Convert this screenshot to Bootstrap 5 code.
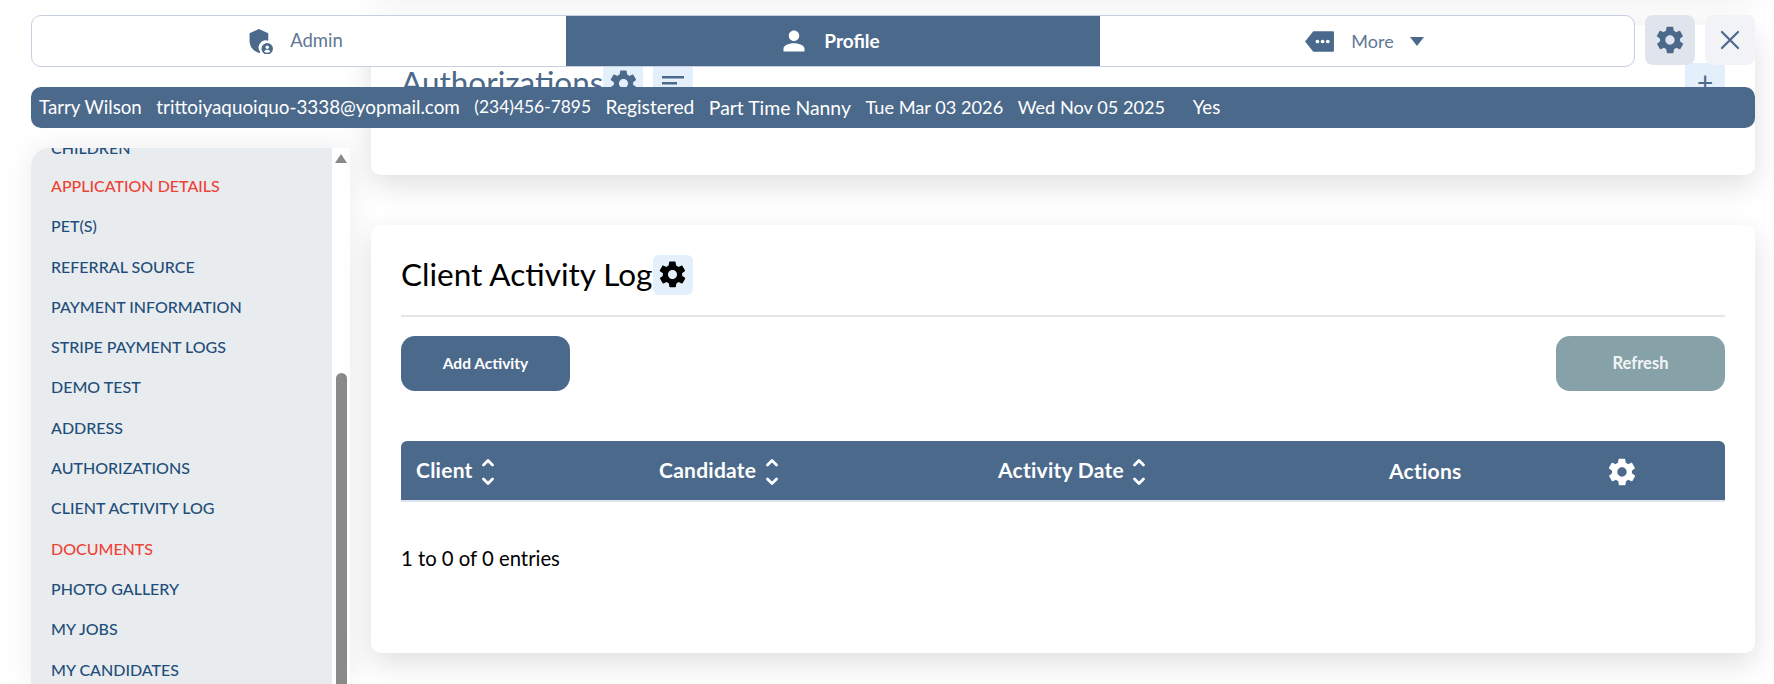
<!DOCTYPE html>
<html lang="en">
<head>
    <meta charset="UTF-8">
    <meta name="viewport" content="width=device-width, initial-scale=1.0">
    <title>Client Activity Log</title>
    <link rel="stylesheet" href="https://cdn.jsdelivr.net/npm/bootstrap@5.3.0/dist/css/bootstrap.min.css">
    <style>
        html, body { height: 684px; overflow: hidden; }
        body { background: #fff; color: #000; font-family: "Lato", "Noto Sans", sans-serif; position: relative; }
        .page-cols { padding: 0 19px 0 31px; gap: 21px; height: 684px; overflow: hidden; }

        /* top stack sits over the scrolled page */
        .top-stack { position: absolute; left: 31px; right: 19px; top: 15px; }
        .tab-row { gap: 7px; height: 52px; }
        .tab-group { border: 1px solid #c5cfe0; border-radius: 10px; background: #fff; overflow: hidden; height: 52px; }
        .tab-item { flex: 1 1 0; color: #5f7893; font-size: 18.5px; gap: 16px; padding-right: 6px; }
        .tab-item.on { background: #4b698b; color: #fff; font-weight: 700; font-size: 19px; }
        .tab-item.more-tab { font-size: 18px; }
        .side-btn { width: 50px; height: 50px; border-radius: 8px; }
        .side-btn.gear { background: #e0e4ec; margin-left: 3px; }
        .side-btn.shut { background: #f2f3f6; margin-left: 3px; }
        .info-strip { margin-top: 20px; height: 41px; background: #4b698b; color: #fff; border-radius: 10px; padding: 0 8px; font-size: 18.7px; }
        .info-strip span { margin-right: 14.500px; white-space: nowrap; }
        .info-strip .mail-val { font-size: 18.850px; }
        .info-strip .phone-val { font-size: 17.4px; }
        .info-strip .status-val { font-size: 19.200px; }
        .info-strip .type-val { font-size: 19.400px; }
        .info-strip .date-val { font-size: 18.2px; }
        .info-strip .yes-val { margin-left: 13px; }

        /* left menu */
        .side-wrap { width: 319px; flex: none; margin-top: 148px; background: #fff; box-shadow: 0 0 30px rgba(0,0,0,.08); border-radius: 18px 0 0 0; overflow: hidden; }
        .side-list { width: 301px; background: #e9ecef; margin: 0; padding: 0 0 0 20px; list-style: none; }
        .side-list li { height: 40.3px; line-height: 40px; font-size: 16px; font-weight: 500; color: #1f4e7a; white-space: nowrap; }
        .side-list li.first { height: 18px; line-height: 0; }
        .side-list li.red { color: #ee4236; }
        .side-track { width: 18px; }
        .track-arrow { width: 0; height: 0; margin: 6px 0 0 3px; border-left: 6.5px solid transparent; border-right: 6.5px solid transparent; border-bottom: 9px solid #8a8a8a; }
        .track-thumb { width: 11px; margin: 210px 0 0 4px; height: 400px; background: #8a8a8a; border-radius: 6px 6px 0 0; }

        /* right cards */
        .main-col { min-width: 0; }
        .panel-box { background: #fff; border-radius: 10px; box-shadow: 0 10px 30px rgba(0,0,0,.13); }
        .panel-ghost { height: 10px; margin-top: -20px; }
        .panel-auth { height: 150px; margin-top: 35px; padding: 0 30px; }
        .panel-log { height: 428px; margin-top: 50px; padding: 0 30px; }
        .auth-head { padding-top: 38px; }
        .auth-title { font-size: 31.5px; line-height: 38px; color: #4b698b; font-weight: 400; margin: 0; }
        .tool-chip { width: 40px; height: 40px; background: #e3f0fc; border-radius: 6px; }
        .tool-chip.next-chip { margin-left: 10px; }
        .plus-chip { width: 40px; height: 40px; background: #e3f0fc; border-radius: 4px; color: #4b698b; font-size: 28px; line-height: 38px; text-align: center; }
        .log-head { height: 92px; padding-top: 9px; border-bottom: 2px solid #e6e6e6; }
        .log-title { font-size: 31.5px; font-weight: 400; margin: 0; color: #000; }
        .act-row { margin-top: 19px; }
        .act-btn { width: 169px; height: 55px; padding-bottom: 1px; border-radius: 14px; border: 0; color: #fff; font-size: 15.5px; font-weight: 700; }
        .act-btn.add { background: #4b698b; }
        .act-btn.refresh { background: #86a1a7; font-size: 16.500px; color: #f2f5f6; }
        .log-table { margin: 50px 0 0; width: 100%; table-layout: fixed; }
        .log-table th { background: #4b698b; color: #fff; height: 60px; font-size: 21px; letter-spacing: .25px; font-weight: 700; vertical-align: middle; border-bottom: 2px solid #dfe3ec; padding: 0 0 0 15px; white-space: nowrap; }
        .log-table th:first-child { border-radius: 6px 0 0 0; }
        .log-table th:last-child { border-radius: 0 6px 0 0; }
        .col-client { width: 243px; }
        .col-candidate { width: 339px; }
        .col-date { width: 391px; }
        .col-actions { width: 217px; }
        .sort-arrows { margin-left: 3px; vertical-align: middle; }
        .entry-note { margin-top: 41px; font-size: 20.3px; }
    </style>
</head>
<body>
    <svg width="0" height="0" class="d-block">
        <symbol id="ic-gear" viewBox="0 0 24 24">
            <path fill="currentColor" d="M19.4 13c.1-.3.1-.7.1-1s0-.7-.1-1l2.1-1.6c.2-.2.2-.4.1-.6l-2-3.5c-.1-.2-.4-.3-.6-.2l-2.5 1c-.5-.4-1.1-.7-1.7-1l-.4-2.6c0-.3-.2-.5-.5-.5h-4c-.3 0-.5.2-.5.4l-.4 2.7c-.6.2-1.2.6-1.7 1l-2.500-1c-.2-.1-.5 0-.6.2l-2 3.5c-.1.2-.1.5.1.6L4.6 11c0 .3-.1.7-.1 1s0 .7.1 1l-2.100 1.600c-.2.2-.2.4-.1.6l2 3.500c.1.2.4.3.6.2l2.500-1c.5.4 1.100.7 1.700 1l.4 2.600c0 .2.2.4.5.4h4c.3 0 .5-.2.5-.4l.4-2.600c.6-.3 1.200-.6 1.700-1l2.500 1c.2.1.5 0 .6-.2l2-3.500c.1-.2.1-.5-.1-.6L19.400 13zM12 15.500c-1.900 0-3.500-1.600-3.500-3.500s1.600-3.500 3.500-3.500 3.500 1.600 3.500 3.500-1.600 3.500-3.500 3.500z"/>
        </symbol>
        <symbol id="ic-sort" viewBox="0 0 14 30">
            <path fill="none" stroke="currentColor" stroke-width="2.800" stroke-linecap="round" stroke-linejoin="round" d="M2.500 8 7 3.500 11.500 8M2.500 22 7 26.500 11.500 22"/>
        </symbol>
    </svg>

    <div class="page-cols d-flex">
        <div class="side-wrap d-flex">
            <ul class="side-list">
                <li class="first">CHILDREN</li>
                <li class="red">APPLICATION DETAILS</li>
                <li>PET(S)</li>
                <li>REFERRAL SOURCE</li>
                <li>PAYMENT INFORMATION</li>
                <li>STRIPE PAYMENT LOGS</li>
                <li>DEMO TEST</li>
                <li>ADDRESS</li>
                <li>AUTHORIZATIONS</li>
                <li>CLIENT ACTIVITY LOG</li>
                <li class="red">DOCUMENTS</li>
                <li>PHOTO GALLERY</li>
                <li>MY JOBS</li>
                <li>MY CANDIDATES</li>
            </ul>
            <div class="side-track">
                <div class="track-arrow"></div>
                <div class="track-thumb"></div>
            </div>
        </div>

        <div class="main-col flex-grow-1">
            <div class="panel-box panel-ghost"></div>
            <div class="panel-box panel-auth">
                <div class="auth-head d-flex align-items-start">
                    <h2 class="auth-title">Authorizations</h2>
                    <div class="tool-chip d-flex align-items-center justify-content-center"><svg width="31" height="31" style="color:#4b698b"><use href="#ic-gear"/></svg></div>
                    <div class="tool-chip next-chip d-flex align-items-center justify-content-center"><svg width="30" height="30" viewBox="0 0 30 30"><path d="M4 8h22v2.500H4zM4 14h15v2.500H4zM4 20h8v2.500H4z" fill="#4b698b"/></svg></div>
                    <div class="plus-chip ms-auto me-0">+</div>
                </div>
            </div>
            <div class="panel-box panel-log">
                <div class="log-head d-flex align-items-center">
                    <h2 class="log-title">Client Activity Log</h2>
                    <div class="tool-chip d-flex align-items-center justify-content-center"><svg width="31" height="31"><use href="#ic-gear"/></svg></div>
                </div>
                <div class="act-row d-flex justify-content-between">
                    <button class="act-btn add">Add Activity</button>
                    <button class="act-btn refresh">Refresh</button>
                </div>
                <table class="log-table">
                    <colgroup><col class="col-client"><col class="col-candidate"><col class="col-date"><col class="col-actions"><col></colgroup>
                    <thead>
                        <tr>
                            <th>Client <svg class="sort-arrows" width="14" height="30"><use href="#ic-sort"/></svg></th>
                            <th>Candidate <svg class="sort-arrows" width="14" height="30"><use href="#ic-sort"/></svg></th>
                            <th>Activity Date <svg class="sort-arrows" width="14" height="30"><use href="#ic-sort"/></svg></th>
                            <th>Actions</th>
                            <th><svg width="32" height="32"><use href="#ic-gear"/></svg></th>
                        </tr>
                    </thead>
                </table>
                <div class="entry-note">1 to 0 of 0 entries</div>
            </div>
        </div>
    </div>

    <div class="top-stack">
        <div class="tab-row d-flex">
            <div class="tab-group d-flex flex-grow-1">
                <div class="tab-item d-flex align-items-center justify-content-center">
                    <svg width="25" height="26" viewBox="3 0 23 25"><path fill="#4b698b" d="M12 1 3 5v7c0 6 4 10.500 9 12 .5-.1 1-.3 1.500-.6A7 7 0 0 1 21 12.200V5z"/><circle cx="20" cy="20" r="5.500" fill="#4b698b"/><circle cx="20" cy="18.500" r="1.600" fill="#fff"/><path d="M17 22.800c.6-1.300 1.700-1.800 3-1.800s2.400.5 3 1.800c-.8.700-1.800 1.100-3 1.100s-2.200-.4-3-1.100z" fill="#fff"/></svg>
                    <span>Admin</span>
                </div>
                <div class="tab-item on d-flex align-items-center justify-content-center">
                    <svg width="28" height="28" viewBox="0 0 24 24"><path fill="#fff" d="M12 12c2.500 0 4.500-2 4.500-4.500S14.500 3 12 3 7.500 5 7.500 7.500 9.500 12 12 12zm0 2c-3 0-9 1.500-9 4.500V21h18v-2.500c0-3-6-4.500-9-4.500z"/></svg>
                    <span>Profile</span>
                </div>
                <div class="tab-item more-tab d-flex align-items-center justify-content-center">
                    <svg width="31" height="23" viewBox="0 0 30 22"><path fill="#4b698b" d="M9 1h19a1 1 0 0 1 1 1v18a1 1 0 0 1-1 1H9L1 11z"/><circle cx="13" cy="11" r="1.800" fill="#fff"/><circle cx="18" cy="11" r="1.800" fill="#fff"/><circle cx="23" cy="11" r="1.800" fill="#fff"/></svg>
                    <span>More</span>
                    <svg width="14" height="9" viewBox="0 0 14 9"><path fill="#4b698b" d="M0 0h14L7 9z"/></svg>
                </div>
            </div>
            <div class="side-btn gear d-flex align-items-center justify-content-center"><svg width="32" height="32" style="color:#4b698b"><use href="#ic-gear"/></svg></div>
            <div class="side-btn shut d-flex align-items-center justify-content-center"><svg width="22" height="22" viewBox="0 0 22 22"><path d="M3 3l16 16M19 3 3 19" stroke="#4b698b" stroke-width="2.200" stroke-linecap="round"/></svg></div>
        </div>
        <div class="info-strip d-flex align-items-center">
            <span>Tarry Wilson</span>
            <span class="mail-val">trittoiyaquoiquo-3338@yopmail.com</span>
            <span class="phone-val">(234)456-7895</span>
            <span class="status-val">Registered</span>
            <span class="type-val">Part Time Nanny</span>
            <span class="date-val">Tue Mar 03 2026</span>
            <span class="date-val">Wed Nov 05 2025</span>
            <span class="yes-val">Yes</span>
        </div>
    </div>
</body>
</html>
